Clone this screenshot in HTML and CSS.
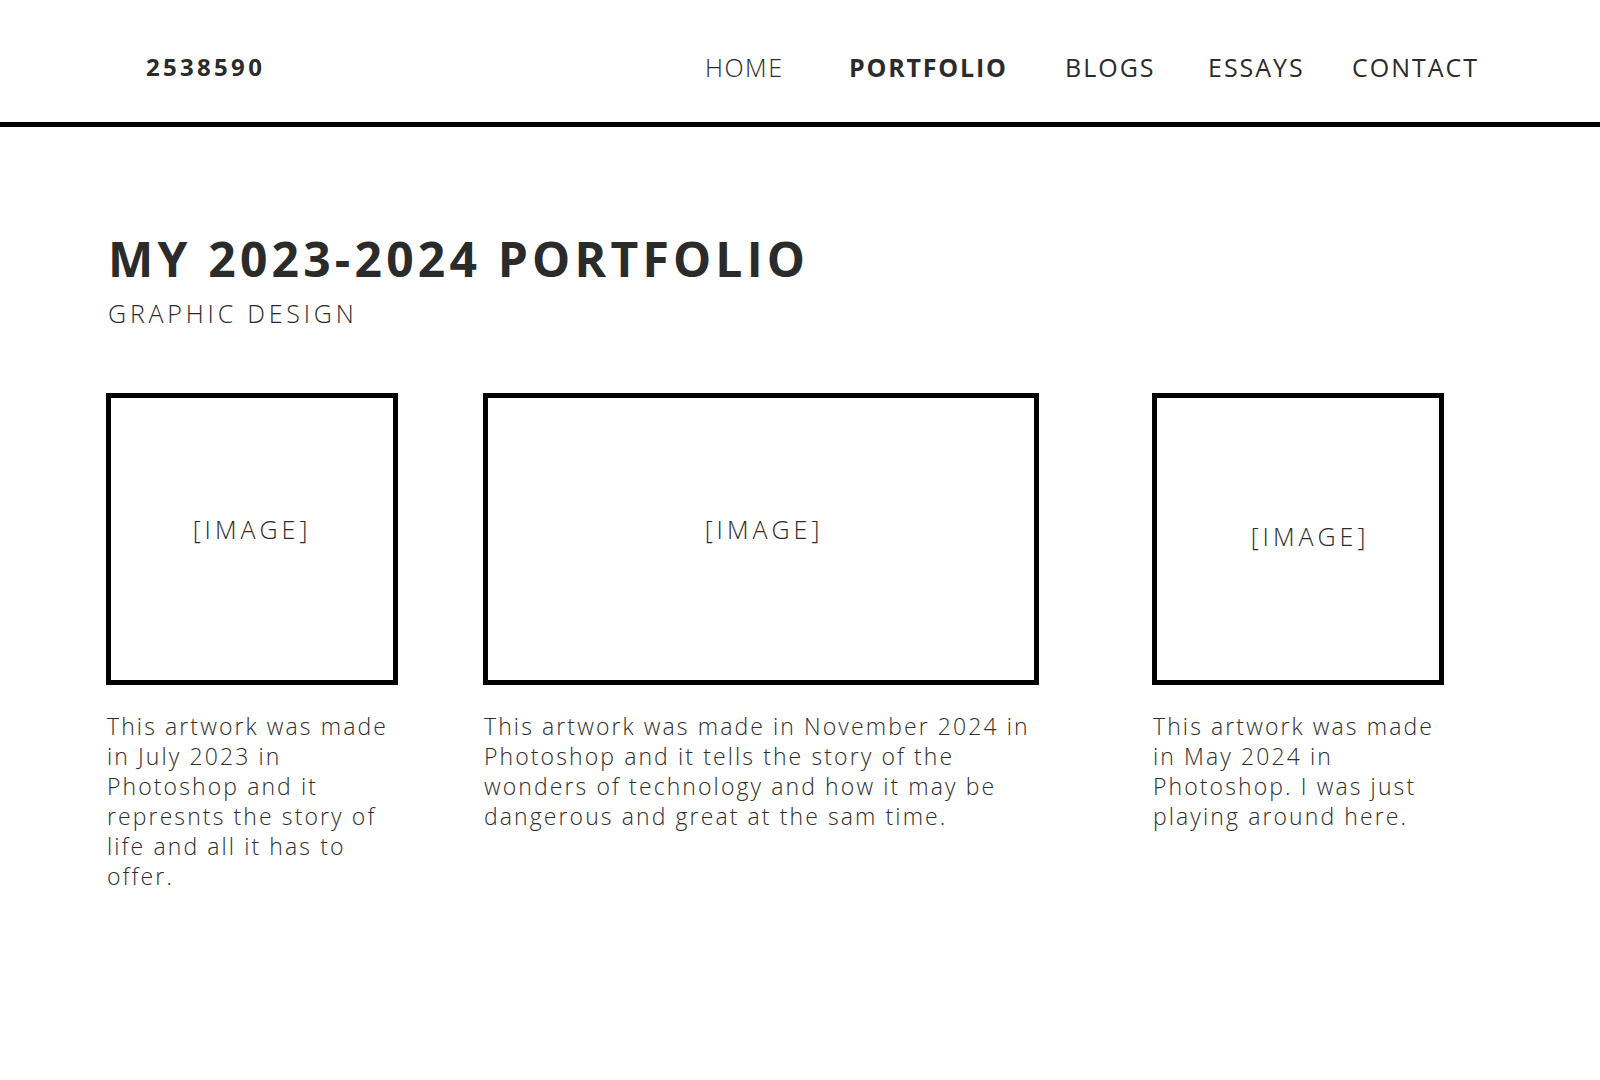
FILE: index.html
```html
<!DOCTYPE html>
<html lang="en">
<head>
<meta charset="utf-8">
<title>2538590 – Portfolio</title>
<link rel="stylesheet" href="styles.css">
</head>
<body>
<header class="site-header">
  <div class="logo">2538590</div>
  <nav class="nav">
    <a class="nav-item nav-light" href="#">HOME</a>
    <a class="nav-item nav-active" href="#">PORTFOLIO</a>
    <a class="nav-item" href="#">BLOGS</a>
    <a class="nav-item" href="#">ESSAYS</a>
    <a class="nav-item" href="#">CONTACT</a>
  </nav>
</header>
<main class="content">
  <h1 class="title">MY 2023-2024 PORTFOLIO</h1>
  <p class="subtitle">GRAPHIC DESIGN</p>
  <section class="gallery">
    <figure class="card card-sm">
      <div class="frame"><span class="placeholder">[IMAGE]</span></div>
      <figcaption class="caption">This artwork was made in July 2023 in Photoshop and it represnts the story of life and all it has to offer.</figcaption>
    </figure>
    <figure class="card card-lg">
      <div class="frame frame-wide"><span class="placeholder">[IMAGE]</span></div>
      <figcaption class="caption">This artwork was made in November 2024 in Photoshop and it tells the story of the wonders of technology and how it may be dangerous and great at the sam time.</figcaption>
    </figure>
    <figure class="card card-sm card-last">
      <div class="frame frame-offset"><span class="placeholder">[IMAGE]</span></div>
      <figcaption class="caption">This artwork was made in May 2024 in Photoshop. I was just playing around here.</figcaption>
    </figure>
  </section>
</main>
</body>
</html>
```

FILE: styles.css
```css
* {
  box-sizing: border-box;
}

html, body {
  margin: 0;
  padding: 0;
  background: #ffffff;
}

body {
  font-family: "Open Sans", "Liberation Sans", sans-serif;
  color: #2b2b2b;
}

/* Header */
.site-header {
  display: flex;
  align-items: flex-start;
  height: 127px;
  padding: 50px 0 0 146px;
  border-bottom: 5px solid #000;
}

.logo {
  flex: 0 0 559px;
  font-size: 24px;
  line-height: 34px;
  font-weight: 700;
  letter-spacing: 3.3px;
  color: #2b2b2b;
}

.nav {
  display: grid;
  grid-template-columns: 144px 216px 143px 144px auto;
}

.nav-item {
  font-size: 25px;
  line-height: 34px;
  font-weight: 400;
  letter-spacing: 2px;
  color: #2b2b2b;
  text-decoration: none;
}

.nav-light {
  font-weight: 300;
  letter-spacing: 1.5px;
}

.nav-active {
  font-weight: 700;
  letter-spacing: 1.8px;
}

/* Content */
.content {
  padding: 108px 0 0 106px;
}

.title {
  margin: 0;
  padding-left: 2px;
  font-size: 48px;
  line-height: 48px;
  font-weight: 700;
  letter-spacing: 4.2px;
  color: #2b2b2b;
}

.subtitle {
  margin: 18px 0 0;
  padding-left: 2px;
  font-size: 25px;
  line-height: 25px;
  font-weight: 300;
  letter-spacing: 3.8px;
  color: #2b2b2b;
}

.gallery {
  display: flex;
  align-items: flex-start;
  gap: 85px;
  margin-top: 67px;
}

.card {
  margin: 0;
}

.card-sm {
  width: 292px;
}

.card-lg {
  width: 556px;
}

.card-last {
  margin-left: 28px;
}

.frame {
  height: 292px;
  border: 5px solid #000;
  display: flex;
  align-items: center;
  justify-content: center;
  padding-bottom: 20px;
}

.frame-wide {
  padding-left: 6px;
}

.frame-offset {
  padding: 0 0 6px 24px;
}

.placeholder {
  font-size: 25px;
  font-weight: 300;
  letter-spacing: 4px;
  color: #2b2b2b;
}

.caption {
  margin-top: 26px;
  padding-left: 1px;
  font-size: 23px;
  line-height: 30px;
  font-weight: 300;
  letter-spacing: 2.1px;
  color: #2e2e2e;
}
```
